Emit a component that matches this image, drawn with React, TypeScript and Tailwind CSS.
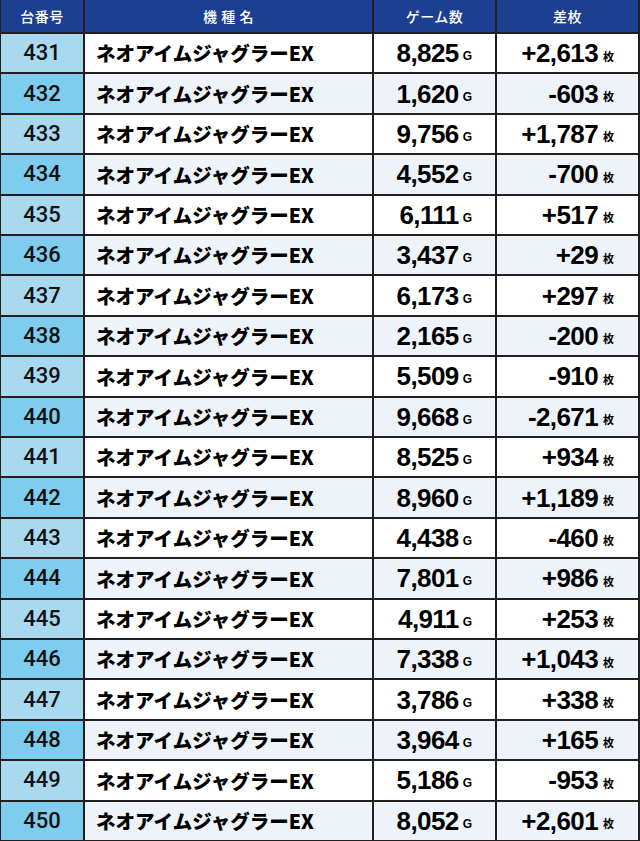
const rows: [number, string, string][] = [
  [431, "8,825", "+2,613"],
  [432, "1,620", "-603"],
  [433, "9,756", "+1,787"],
  [434, "4,552", "-700"],
  [435, "6,111", "+517"],
  [436, "3,437", "+29"],
  [437, "6,173", "+297"],
  [438, "2,165", "-200"],
  [439, "5,509", "-910"],
  [440, "9,668", "-2,671"],
  [441, "8,525", "+934"],
  [442, "8,960", "+1,189"],
  [443, "4,438", "-460"],
  [444, "7,801", "+986"],
  [445, "4,911", "+253"],
  [446, "7,338", "+1,043"],
  [447, "3,786", "+338"],
  [448, "3,964", "+165"],
  [449, "5,186", "-953"],
  [450, "8,052", "+2,601"],
];

const jp = "font-['Noto_Sans_CJK_JP',sans-serif]";
const num = "font-['Liberation_Sans',Arial,sans-serif]";

export default function App() {
  return (
    <div className="w-[640px] h-[841px] overflow-hidden bg-[#231f20] pl-px pr-[2px] pb-px">
      <div className="grid h-full grid-cols-[82px_287px_121px_1fr] grid-rows-[32px_repeat(20,minmax(0,1fr))] gap-[2px] leading-none">
        {["台番号", "機 種 名", "ゲーム数", "差枚"].map((h) => (
          <div
            key={h}
            className={`flex items-center justify-center bg-[#1c3f92] text-white text-[14px] tracking-[0.5px] font-medium whitespace-pre ${jp}`}
          >
            {h}
          </div>
        ))}
        {rows.map(([no, games, diff], i) => {
          const even = i % 2 === 1;
          const bg = even ? "bg-[#eef3fa]" : "bg-white";
          return [
            <div
              key={`n${no}`}
              className={`flex items-center justify-center text-[22px] text-[#111] font-medium font-['Roboto',sans-serif] ${
                even ? "bg-[#7fcdee]" : "bg-[#a9d9ee]"
              }`}
            >
              {no}
            </div>,
            <div
              key={`m${no}`}
              className={`flex items-center pl-[11px] text-[19.5px] font-black text-black ${jp} ${bg}`}
            >
              ネオアイムジャグラーEX
            </div>,
            <div key={`g${no}`} className={`flex items-center justify-end pr-[23px] ${bg}`}>
              <span className={`text-[26px] font-bold tracking-[-0.6px] text-black ${num}`}>{games}</span>
              <span className={`ml-[4px] mt-[6px] text-[12px] font-bold text-black ${num}`}>G</span>
            </div>,
            <div key={`d${no}`} className={`flex items-center justify-end pr-[24px] ${bg}`}>
              <span className={`text-[26px] font-bold tracking-[-0.6px] text-black ${num}`}>{diff}</span>
              <span className={`ml-[5px] mt-[6px] text-[11px] font-bold text-black ${jp}`}>枚</span>
            </div>,
          ];
        })}
      </div>
    </div>
  );
}
